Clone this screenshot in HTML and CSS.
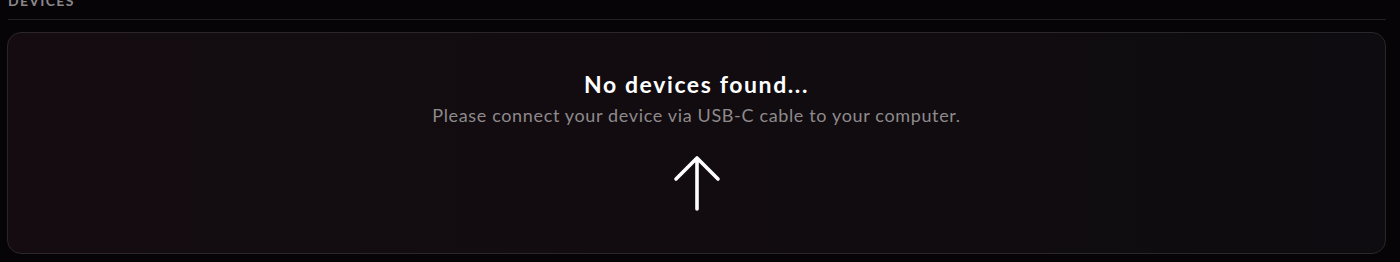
FILE: index.html
```html
<!DOCTYPE html>
<html>
<head>
<meta charset="utf-8">
<link rel="stylesheet" href="styles.css">
</head>
<body>
<section class="devices">
  <h2 class="section-title">Devices</h2>
  <div class="card">
    <h3 class="empty-title">No devices found...</h3>
    <p class="empty-text">Please connect your device via USB-C cable to your computer.</p>
    <svg class="arrow" width="48" height="58" viewBox="0 0 48 58" fill="none">
      <path d="M24 55 V4 M3 25 L24 4 L45 25" stroke="#ffffff" stroke-width="3.6" stroke-linecap="round" stroke-linejoin="round"/>
    </svg>
  </div>
</section>
</body>
</html>
```
FILE: styles.css
```css
html, body {
  margin: 0;
  padding: 0;
  background: #070407;
  height: 262px;
  overflow: hidden;
}
body {
  font-family: "Lato", "Open Sans", sans-serif;
}
.devices {
  padding: 0 14px 0 7px;
}
.section-title {
  margin: -8px 0 0 1px;
  font-size: 14px;
  font-weight: 700;
  letter-spacing: 1.3px;
  text-transform: uppercase;
  color: #8a8789;
  line-height: 18px;
  padding-bottom: 9px;
  border-bottom: 1px solid #242124;
}
.card {
  margin-top: 12px;
  height: 222px;
  box-sizing: border-box;
  border: 1px solid #2a2629;
  border-radius: 14px;
  background: linear-gradient(90deg, #140c10 0%, #120c10 45%, #0e0c10 100%);
  display: flex;
  flex-direction: column;
  align-items: center;
}
.empty-title {
  margin: 37px 0 0;
  font-size: 23px;
  font-weight: 700;
  letter-spacing: 1.6px;
  color: #ffffff;
  line-height: 28px;
}
.empty-text {
  margin: 6px 0 0;
  font-size: 18px;
  font-weight: 400;
  letter-spacing: 0.65px;
  color: #8e8a8c;
  line-height: 22px;
}
.arrow {
  margin-top: 28px;
}
```
